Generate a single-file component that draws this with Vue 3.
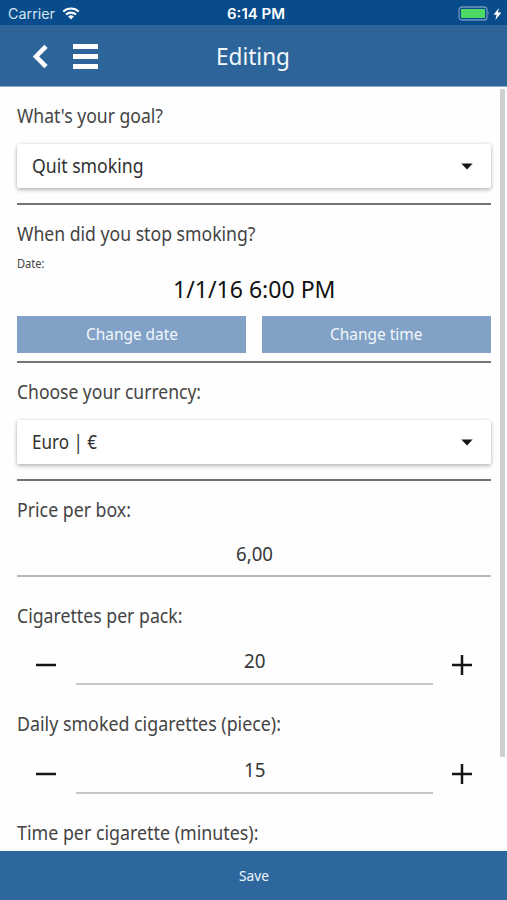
<script setup>
import { h, ref } from 'vue'

// One line of text fitted to a given width, with its baseline 18px below the top.
const FitText = (props) =>
  h('svg', { width: props.w, height: 24, class: 'fit' }, [
    h('text', { x: 0, y: 18, textLength: props.w, lengthAdjust: 'spacingAndGlyphs', fill: 'currentColor' }, props.t),
  ])
FitText.props = ['t', 'w']

const pack = ref(20)
const daily = ref(15)
</script>

<template>
  <div class="screen">
    <div class="status">
      <div class="carrier">
        <FitText t="Carrier" :w="47" />
        <svg class="wifi" width="18" height="13" viewBox="0 0 18 13">
          <path d="M1.2 4.6a11.2 11.2 0 0 1 15.6 0M4 7.6a7.2 7.2 0 0 1 10 0" fill="none" stroke="#fff" stroke-width="2.1" />
          <path d="M9 12.4 6.1 9.6a4.2 4.2 0 0 1 5.8 0z" fill="#fff" />
        </svg>
      </div>
      <FitText class="clock" t="6:14 PM" :w="58" />
      <svg class="battery" width="44" height="16" viewBox="0 0 44 16">
        <rect x="1" y="1" width="28" height="13" rx="3" fill="none" stroke="#6f95bd" stroke-width="1.3" />
        <rect x="3" y="3" width="24" height="9" rx="1" fill="#4cd964" />
        <path d="M30.5 5.3q1.7 2.2 0 4.4z" fill="#6f95bd" />
        <path d="M41 2 35.5 8.8h3.1L37.4 14 43.4 6.6h-3.5z" fill="#fff" />
      </svg>
    </div>

    <header class="header">
      <svg class="chevron" width="17" height="25" viewBox="0 0 17 25">
        <path d="M14 2.3 4 12.5 14 22.7" fill="none" stroke="#fff" stroke-width="4.6" />
      </svg>
      <div class="menu"><i></i><i></i><i></i></div>
      <FitText class="title" t="Editing" :w="74" />
    </header>

    <main class="content">
      <div class="label first"><FitText t="What's your goal?" :w="146" /></div>
      <div class="select">
        <FitText t="Quit smoking" :w="111.5" />
        <svg width="12" height="7" viewBox="0 0 12 7"><path d="M.3.5h11.4L6 6.5z" fill="#161616" /></svg>
      </div>
      <hr class="rule after-select">

      <div class="label when"><FitText t="When did you stop smoking?" :w="238.5" /></div>
      <div class="date-label"><FitText t="Date:" :w="27.5" /></div>
      <div class="date"><FitText t="1/1/16 6:00 PM" :w="162.5" /></div>
      <div class="buttons">
        <button><FitText t="Change date" :w="92" /></button>
        <button><FitText t="Change time" :w="92.5" /></button>
      </div>
      <hr class="rule after-buttons">

      <div class="label currency"><FitText t="Choose your currency:" :w="184" /></div>
      <div class="select">
        <FitText t="Euro | €" :w="65" />
        <svg width="12" height="7" viewBox="0 0 12 7"><path d="M.3.5h11.4L6 6.5z" fill="#161616" /></svg>
      </div>
      <hr class="rule after-select">

      <div class="label price"><FitText t="Price per box:" :w="114" /></div>
      <div class="field wide"><FitText t="6,00" :w="37" /></div>

      <div class="label pack"><FitText t="Cigarettes per pack:" :w="165.5" /></div>
      <div class="stepper">
        <svg class="sign" width="20" height="20" @click="pack--"><path d="M0 10h20" /></svg>
        <div class="field"><FitText :t="String(pack)" :w="21.5" /></div>
        <svg class="sign" width="20" height="20" @click="pack++"><path d="M0 10h20M10 0v20" /></svg>
      </div>

      <div class="label daily"><FitText t="Daily smoked cigarettes (piece):" :w="264" /></div>
      <div class="stepper">
        <svg class="sign" width="20" height="20" @click="daily--"><path d="M0 10h20" /></svg>
        <div class="field"><FitText :t="String(daily)" :w="21.5" /></div>
        <svg class="sign" width="20" height="20" @click="daily++"><path d="M0 10h20M10 0v20" /></svg>
      </div>

      <div class="label daily"><FitText t="Time per cigarette (minutes):" :w="241.5" /></div>
      <div class="scrollbar"></div>
    </main>

    <footer class="footer"><FitText t="Save" :w="30" /></footer>
  </div>
</template>

<style>
body { background: #fefefe; }
</style>

<style scoped>
.screen {
  width: 507px;
  height: 900px;
  display: flex;
  flex-direction: column;
  overflow: hidden;
  background: #fefefe;
  font-family: "Noto Sans", "Open Sans", sans-serif;
  font-size: 19.3px;
  color: #444;
}
.fit { display: block; overflow: visible; flex: none; }
.status {
  height: 25px;
  flex: none;
  display: grid;
  grid-template-columns: 1fr auto 1fr;
  align-items: start;
  background: #084c8b;
  color: #fff;
  font-family: Inter, "Liberation Sans", sans-serif;
}
.carrier { display: flex; gap: 7px; padding-left: 8px; font-size: 14px; color: #d5e4f2; }
.wifi { margin-top: 7px; }
.carrier .fit, .clock { margin-top: 1px; }
.clock { font-size: 14px; font-weight: 600; margin-left: 5px; }
.battery { justify-self: end; margin: 6px 5px 0 0; }
.header {
  height: 62px;
  flex: none;
  display: flex;
  align-items: flex-start;
  background: #2d659b;
  border-bottom: 1px solid #86a5c4;
  box-sizing: border-box;
  color: #f2f7fc;
}
.chevron { margin: 18.5px 0 0 31.5px; }
.menu { display: flex; flex-direction: column; gap: 5px; margin: 18.5px 0 0 24.5px; }
.menu i { width: 25px; height: 5px; background: #fff; }
.title { font-size: 23.5px; margin: 22px 0 0 118px; }
.content {
  position: relative;
  flex: 1;
  min-height: 0;
  overflow: hidden;
  padding: 0 16px 0 17px;
}
.label { box-sizing: border-box; }
.first { height: 57px; padding-top: 17.5px; }
.select {
  height: 44px;
  box-sizing: border-box;
  display: flex;
  align-items: center;
  justify-content: space-between;
  padding: 1px 18.5px 0 14.5px;
  background: #fff;
  border-radius: 2px;
  box-shadow: 0 2px 4px rgba(0, 0, 0, .26), 0 0 3px rgba(0, 0, 0, .1);
  color: #303030;
}
.rule { height: 2px; border: 0; margin: 0; background: #747474; }
.after-select { margin-top: 15px; }
.after-buttons { margin-top: 8px; }
.when { height: 45px; padding-top: 18px; }
.date-label { height: 24px; font-size: 12px; }
.date { height: 42px; padding-top: 6px; box-sizing: border-box; display: flex; justify-content: center; font-size: 24px; color: #111; }
.buttons { display: grid; grid-template-columns: 1fr 1fr; gap: 16px; }
.buttons button {
  height: 37px;
  display: flex;
  justify-content: center;
  align-items: flex-start;
  padding: 6px 0 0;
  border: 0;
  background: #81a2c6;
  color: #f1f6fb;
  font-family: inherit;
  font-size: 16.7px;
}
.currency { height: 57px; padding-top: 18px; }
.price { height: 62px; padding-top: 18px; }
.field {
  height: 34px;
  box-sizing: border-box;
  display: flex;
  justify-content: center;
  border-bottom: 2px solid #b8b8b8;
  color: #363636;
}
.pack { height: 73px; padding-top: 28px; }
.stepper { display: grid; grid-template-columns: 59px 357px 1fr; }
.stepper .field { height: 35px; border-color: #c6c6c6; }
.sign { margin: 5px 0 0 19.3px; fill: none; stroke: #151515; stroke-width: 2.5; }
.daily { height: 74px; padding-top: 28px; }
.scrollbar { position: absolute; top: 2px; right: 2px; width: 5px; height: 668px; background: #cfcfcf; }
.footer {
  height: 49px;
  flex: none;
  display: flex;
  justify-content: center;
  align-items: flex-start;
  padding-top: 12px;
  box-sizing: border-box;
  background: #2e679e;
  color: #eef5fc;
  font-size: 14.5px;
}
</style>
